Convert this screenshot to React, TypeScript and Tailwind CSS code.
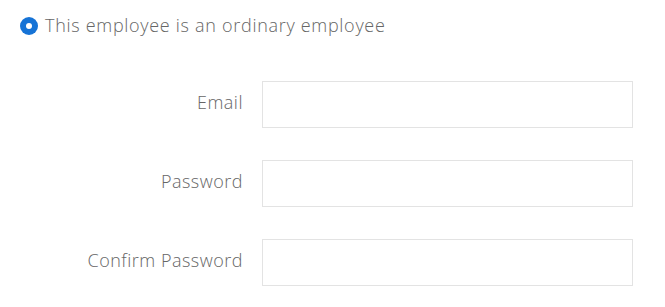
import React from 'react';

const fields = ['Email', 'Password', 'Confirm Password'];

export default function App() {
  return (
    <div className="w-[665px] h-[307px] bg-white text-[#666666] font-['Open_Sans',sans-serif]">
      {/* radio option */}
      <label className="flex items-center pl-[20px] pt-[13px] h-[38px]">
        <span className="flex items-center justify-center w-[18px] h-[18px] rounded-full bg-[#1673d6]">
          <span className="w-[6px] h-[6px] rounded-full bg-white" />
        </span>
        <span className="ml-[7px] text-[18px] font-light tracking-[0.7px]">
          This employee is an ordinary employee
        </span>
      </label>

      <div className="flex flex-col gap-[32px] mt-[43px]">
        {fields.map((f) => (
          <div key={f} className="flex items-center">
            <span className="w-[243px] pb-[4px] text-right text-[18px] font-light tracking-[0.5px]">{f}</span>
            <input
              type={f === 'Email' ? 'email' : 'password'}
              className="ml-[19px] w-[371px] h-[47px] border border-[#e3e3e3] bg-white outline-none"
            />
          </div>
        ))}
      </div>
    </div>
  );
}
